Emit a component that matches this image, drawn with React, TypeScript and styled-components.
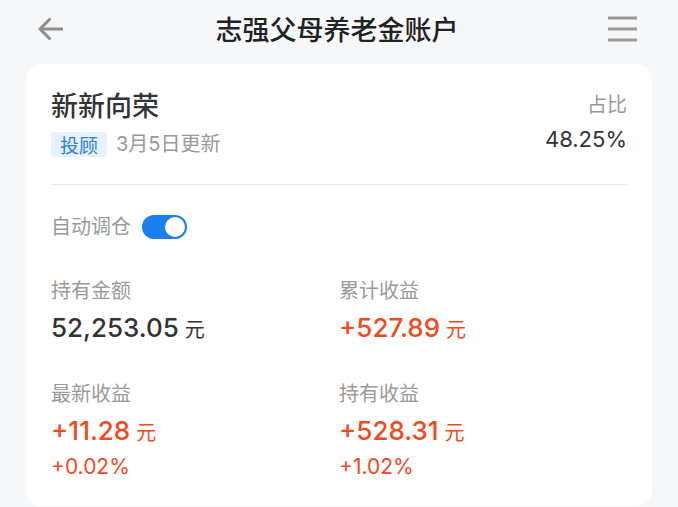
import React from "react";
import styled, { createGlobalStyle } from "styled-components";

const GlobalStyle = createGlobalStyle`
  html, body {
    margin: 0;
    padding: 0;
    background: #f6f7f9;
  }
  body {
    font-family: Inter, "Noto Sans CJK SC", sans-serif;
    -webkit-font-smoothing: antialiased;
  }
`;

const Page = styled.div`
  width: 678px;
  min-height: 507px;
  background: #f6f7f9;
  display: flex;
  flex-direction: column;
`;

const Header = styled.header`
  height: 58px;
  display: grid;
  grid-template-columns: 1fr auto 1fr;
  align-items: center;
  padding: 0 41px 0 37px;
`;

const IconButton = styled.div<{ $align: "start" | "end" }>`
  display: flex;
  justify-content: ${(p) => (p.$align === "start" ? "flex-start" : "flex-end")};
  align-items: center;
  color: #8e8e8e;
`;

const Title = styled.h1`
  margin: 0;
  font-size: 27px;
  line-height: 34px;
  font-weight: 500;
  color: #222;
  font-family: "Noto Sans CJK SC", sans-serif;
`;

const Card = styled.section`
  margin: 6px 26px 0;
  background: #fff;
  border-radius: 16px;
  padding: 24px 25px 27px;
  display: flex;
  flex-direction: column;
`;

const TopRow = styled.div`
  display: flex;
  justify-content: space-between;
  align-items: flex-start;
`;

const Column = styled.div<{ $right?: boolean }>`
  display: flex;
  flex-direction: column;
  align-items: ${(p) => (p.$right ? "flex-end" : "flex-start")};
`;

const Name = styled.div`
  font-family: "Noto Sans CJK SC", sans-serif;
  font-size: 27px;
  line-height: 34px;
  font-weight: 500;
  color: #333;
`;

const MetaRow = styled.div`
  margin-top: 10px;
  display: flex;
  align-items: center;
  gap: 9px;
`;

const Tag = styled.span`
  height: 25px;
  padding: 0 9px;
  border-radius: 3px;
  background: #e8f2fd;
  color: #2a80d8;
  font-family: "Noto Sans CJK SC", sans-serif;
  font-size: 19px;
  line-height: 25px;
`;

const Muted = styled.span`
  color: #9a9a9a;
  font-size: 20px;
  line-height: 25px;
`;

const RatioLabel = styled.div`
  color: #9a9a9a;
  font-size: 20px;
  line-height: 34px;
`;

const RatioValue = styled.div`
  color: #333;
  font-size: 22px;
  line-height: 34px;
  font-weight: 400;
`;

const Divider = styled.hr`
  margin: 27px 0 0;
  border: 0;
  height: 1px;
  background: #e9e9e9;
`;

const AutoRow = styled.div`
  margin-top: 30px;
  height: 24px;
  display: flex;
  align-items: center;
  gap: 11px;
`;

const Toggle = styled.div<{ $on: boolean }>`
  width: 45px;
  height: 24px;
  border-radius: 12px;
  background: ${(p) => (p.$on ? "#1c7fec" : "#ddd")};
  display: flex;
  align-items: center;
  justify-content: ${(p) => (p.$on ? "flex-end" : "flex-start")};
  padding: 0 2px;
  box-sizing: border-box;
`;

const Knob = styled.div`
  width: 20px;
  height: 20px;
  border-radius: 50%;
  background: #fff;
`;

const StatsGrid = styled.div`
  margin-top: 37px;
  display: grid;
  grid-template-columns: 1fr 1fr;
  row-gap: 27px;
`;

const Stat = styled.div`
  display: flex;
  flex-direction: column;
`;

const StatLabel = styled.div`
  color: #9a9a9a;
  font-size: 20px;
  line-height: 30px;
`;

const StatValue = styled.div<{ $up?: boolean }>`
  color: ${(p) => (p.$up ? "#f2491d" : "#333")};
  font-size: 26px;
  line-height: 44px;
  font-weight: 500;
`;

const Unit = styled.span`
  font-size: 20px;
  font-weight: 400;
  margin-left: 6px;
`;

const StatSub = styled.div`
  color: #f2491d;
  font-size: 21px;
  line-height: 24px;
  font-weight: 400;
`;

const BackIcon = () => (
  <svg width="28" height="26" viewBox="0 0 28 26" fill="none">
    <path
      d="M26 13H3M13.5 2.5L3 13l10.5 10.5"
      stroke="#8e8e8e"
      strokeWidth="3"
      strokeLinecap="butt"
      strokeLinejoin="miter"
    />
  </svg>
);

const MenuIcon = () => (
  <svg width="29" height="26" viewBox="0 0 29 26" fill="none">
    <path d="M0 2h29M0 13h29M0 24h29" stroke="#999" strokeWidth="3" />
  </svg>
);

type StatItem = {
  label: string;
  value: string;
  up?: boolean;
  sub?: string;
};

const stats: StatItem[] = [
  { label: "持有金额", value: "52,253.05" },
  { label: "累计收益", value: "+527.89", up: true },
  { label: "最新收益", value: "+11.28", up: true, sub: "+0.02%" },
  { label: "持有收益", value: "+528.31", up: true, sub: "+1.02%" },
];

export default function App() {
  return (
    <Page>
      <GlobalStyle />
      <Header>
        <IconButton $align="start">
          <BackIcon />
        </IconButton>
        <Title>志强父母养老金账户</Title>
        <IconButton $align="end">
          <MenuIcon />
        </IconButton>
      </Header>
      <Card>
        <TopRow>
          <Column>
            <Name>新新向荣</Name>
            <MetaRow>
              <Tag>投顾</Tag>
              <Muted>3月5日更新</Muted>
            </MetaRow>
          </Column>
          <Column $right>
            <RatioLabel>占比</RatioLabel>
            <RatioValue>48.25%</RatioValue>
          </Column>
        </TopRow>
        <Divider />
        <AutoRow>
          <Muted>自动调仓</Muted>
          <Toggle $on>
            <Knob />
          </Toggle>
        </AutoRow>
        <StatsGrid>
          {stats.map((s) => (
            <Stat key={s.label}>
              <StatLabel>{s.label}</StatLabel>
              <StatValue $up={s.up}>
                {s.value}
                <Unit>元</Unit>
              </StatValue>
              {s.sub && <StatSub>{s.sub}</StatSub>}
            </Stat>
          ))}
        </StatsGrid>
      </Card>
    </Page>
  );
}
